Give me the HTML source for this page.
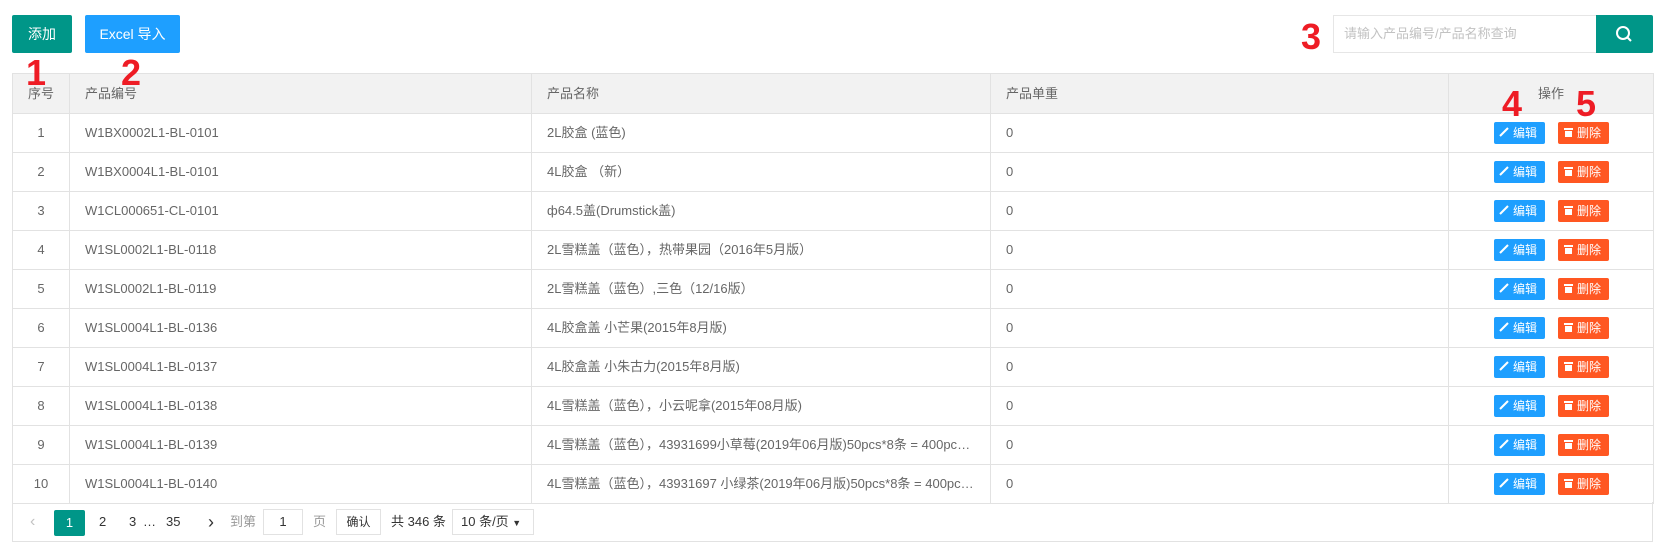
<!DOCTYPE html>
<html><head><meta charset="utf-8"><style>
*{margin:0;padding:0;box-sizing:border-box}
body{width:1666px;height:549px;background:#fff;font-family:"Liberation Sans","Noto Sans CJK SC",sans-serif;font-size:13px;color:#666;position:relative;overflow:hidden}
.abs{position:absolute}
.btn{position:absolute;color:#fff;font-size:14px;text-align:center;line-height:38px;height:38px;top:15px;border-radius:2px}
.red{position:absolute;z-index:5;color:#ee1c25;font-weight:bold;font-size:36px;line-height:1;font-family:"Liberation Sans",sans-serif}
table{position:absolute;left:12px;top:73px;width:1641px;border-collapse:collapse;table-layout:fixed}
td,th{border:1px solid #e2e2e2;height:39px;line-height:18px;vertical-align:middle;padding:0 15px;font-weight:normal;text-align:left;white-space:nowrap;overflow:hidden;text-overflow:ellipsis}
td div{height:18px;line-height:18px;overflow:hidden;text-overflow:ellipsis;white-space:nowrap}
th{background:#f2f2f2;height:40px}
.c{text-align:center;padding:0}
.eb,.db{display:inline-block;height:22px;line-height:22px;color:#fff;font-size:12px;border-radius:2px;vertical-align:middle}
.eb{background:#1e9fff;width:51px;margin-left:45px}
.db{background:#ff5722;width:51px;margin-left:13px}
.pg{position:absolute;left:12px;top:502px;width:1641px;height:40px;border:1px solid #e2e2e2;border-top:none}
.pg span{position:absolute;top:0;line-height:40px;font-size:13px;color:#333;white-space:nowrap}
</style></head><body>
<div class="btn" style="left:12px;width:60px;background:#009688">添加</div>
<div class="btn" style="left:85px;width:95px;background:#1e9fff">Excel 导入</div>
<div class="red" style="left:26px;top:55px">1</div>
<div class="red" style="left:121px;top:55px">2</div>
<div class="red" style="left:1301px;top:19px">3</div>
<div class="red" style="left:1502px;top:86px">4</div>
<div class="red" style="left:1576px;top:86px">5</div>
<div class="abs" style="left:1333px;top:15px;width:264px;height:38px;border:1px solid #e6e6e6;border-right:none;line-height:36px;padding-left:10px;color:#c2c2c2">请输入产品编号/产品名称查询</div>
<div class="abs" style="left:1596px;top:15px;width:57px;height:38px;background:#009688;border-radius:0 2px 2px 0">
<svg width="57" height="38"><circle cx="27" cy="18" r="6" fill="none" stroke="#fff" stroke-width="2"/><line x1="31" y1="22" x2="35" y2="26" stroke="#fff" stroke-width="2"/></svg></div>
<table>
<colgroup><col style="width:57px"><col style="width:462px"><col style="width:459px"><col style="width:458px"><col style="width:205px"></colgroup>
<tr><th class="c">序号</th><th>产品编号</th><th>产品名称</th><th>产品单重</th><th class="c">操作</th></tr>
<tr><td class="c">1</td><td>W1BX0002L1-BL-0101</td><td><div>2L胶盒 (蓝色)</div></td><td>0</td><td class="o"></td></tr>
<tr><td class="c">2</td><td>W1BX0004L1-BL-0101</td><td><div>4L胶盒 （新）</div></td><td>0</td><td class="o"></td></tr>
<tr><td class="c">3</td><td>W1CL000651-CL-0101</td><td><div>ф64.5盖(Drumstick盖)</div></td><td>0</td><td class="o"></td></tr>
<tr><td class="c">4</td><td>W1SL0002L1-BL-0118</td><td><div>2L雪糕盖（蓝色），热带果园（2016年5月版）</div></td><td>0</td><td class="o"></td></tr>
<tr><td class="c">5</td><td>W1SL0002L1-BL-0119</td><td><div>2L雪糕盖（蓝色）,三色（12/16版）</div></td><td>0</td><td class="o"></td></tr>
<tr><td class="c">6</td><td>W1SL0004L1-BL-0136</td><td><div>4L胶盒盖 小芒果(2015年8月版)</div></td><td>0</td><td class="o"></td></tr>
<tr><td class="c">7</td><td>W1SL0004L1-BL-0137</td><td><div>4L胶盒盖 小朱古力(2015年8月版)</div></td><td>0</td><td class="o"></td></tr>
<tr><td class="c">8</td><td>W1SL0004L1-BL-0138</td><td><div>4L雪糕盖（蓝色），小云呢拿(2015年08月版)</div></td><td>0</td><td class="o"></td></tr>
<tr><td class="c">9</td><td>W1SL0004L1-BL-0139</td><td><div>4L雪糕盖（蓝色），43931699小草莓(2019年06月版)50pcs*8条 = 400pcs（新版）</div></td><td>0</td><td class="o"></td></tr>
<tr><td class="c">10</td><td>W1SL0004L1-BL-0140</td><td><div>4L雪糕盖（蓝色），43931697 小绿茶(2019年06月版)50pcs*8条 = 400pcs（新版）</div></td><td>0</td><td class="o"></td></tr>
</table>
<div class="pg">
<span style="left:17px;color:#c2c2c2;font-size:16px">&lsaquo;</span>
<span style="left:41px;top:8px;width:31px;height:26px;line-height:26px;background:#009688;color:#fff;text-align:center;border-radius:2px">1</span>
<span style="left:86px">2</span><span style="left:116px">3</span><span style="left:130px">…</span><span style="left:153px">35</span>
<span style="left:195px;font-size:18px">&rsaquo;</span>
<span style="left:217px;color:#999">到第</span>
<span style="left:250px;top:7px;width:40px;height:26px;line-height:24px;border:1px solid #e2e2e2;text-align:center">1</span>
<span style="left:300px;color:#999">页</span>
<span style="left:323px;top:7px;width:45px;height:26px;line-height:24px;border:1px solid #e2e2e2;text-align:center;font-size:12px">确认</span>
<span style="left:378px">共 346 条</span>
<span style="left:439px;top:7px;width:82px;height:26px;line-height:24px;border:1px solid #e2e2e2;padding-left:8px">10 条/页 <b style="font-size:9px">▼</b></span>
</div>
<script>
document.querySelectorAll('.o').forEach(function(t){t.className='c';t.style.textAlign='left';t.style.padding='0';t.innerHTML='<span class="eb"><svg width="11" height="10" style="margin:0 3px 0 5px"><line x1="1" y1="9" x2="9" y2="1" stroke="#fff" stroke-width="2"/></svg>编辑</span><span class="db"><svg width="11" height="10" style="margin:0 3px 0 5px"><rect x="1" y="1" width="9" height="2" fill="#fff"/><rect x="2" y="4" width="7" height="6" fill="#fff"/></svg>删除</span>';});
</script>
</body></html>
